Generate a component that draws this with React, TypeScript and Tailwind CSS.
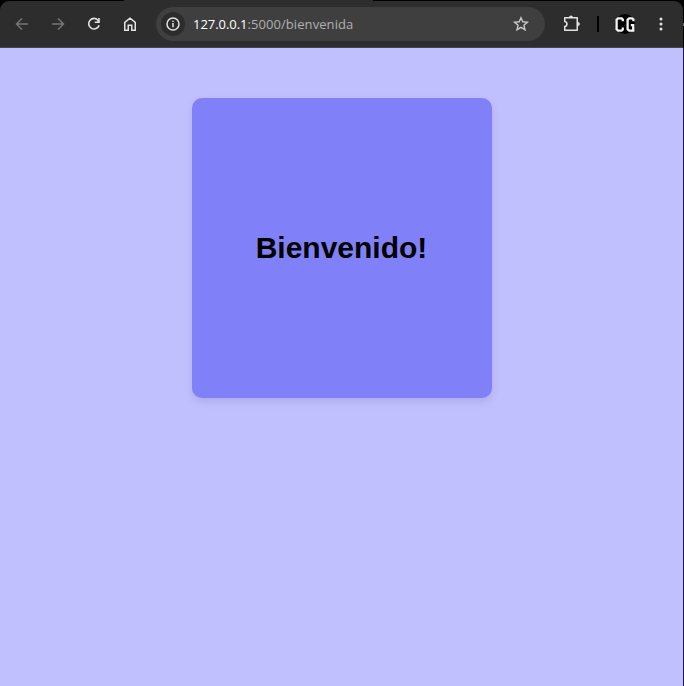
import type { ReactNode } from 'react';

function Icon({ children, className = '' }: { children: ReactNode; className?: string }) {
  return (
    <svg viewBox="0 0 20 20" fill="none" stroke="currentColor" strokeWidth="1.5" className={`size-5 shrink-0 ${className}`}>
      {children}
    </svg>
  );
}

function Toolbar() {
  return (
    <header className="relative h-12 shrink-0 bg-black">
      <div className="ml-[124px] h-px w-[249px] bg-[#2d2d2d]" />
      <div className="absolute top-[23px] right-0 h-[3px] w-px bg-[#6f6759]" />
      <div className="mr-px flex h-[47px] items-center rounded-t-[9px] border-b border-[#48464c] bg-[#2d2d2d] pl-3">
        <div className="flex gap-4 text-[#e3e3e3]">
          <Icon className="text-[#757575]">
            <path d="M16 10H5M10 4.5L4.5 10L10 15.5" />
          </Icon>
          <Icon className="text-[#757575]">
            <path d="M4 10H15M10 4.5L15.5 10L10 15.5" />
          </Icon>
          <Icon>
            <path d="M14.3 6.6A5.3 5.3 0 1 0 15.1 11.2" strokeWidth="1.6" />
            <path d="M15.8 4V9H10.8V7.5H13.2L14.2 6.2V4Z" fill="currentColor" stroke="none" />
          </Icon>
          <Icon>
            <path d="M4.75 16.25V8.3L10 4.1L15.25 8.3V16.25H11.75V11.2H8.25V16.25Z" />
          </Icon>
        </div>
        <div className="ml-4 flex h-[34px] w-[389px] items-center rounded-full bg-[#3f3f3f] pr-3.5 pl-[5px]">
          <div className="flex size-6 items-center justify-center rounded-full bg-[#2c2c2c] text-[#e3e3e3]">
            <Icon>
              <circle cx="10" cy="10" r="6" />
              <path d="M10 9V13.2M10 6.7V8.1" />
            </Icon>
          </div>
          <span className="ml-2 font-['Open_Sans','Noto_Sans',sans-serif] text-[13px] leading-5 tracking-[0.08px] whitespace-nowrap text-[#b0b0b0]">
            <span className="tracking-[-0.05px] text-white">127.0.0.1</span>:5000/bienvenida
          </span>
          <Icon className="ml-auto text-[#c7c7c7]">
            <path d="M10 3.7L11.8 7.8L16.4 8.2L12.9 11.2L14 15.7L10 13.3L6 15.7L7.1 11.2L3.6 8.2L8.2 7.8Z" strokeWidth="1.4" />
          </Icon>
        </div>
        <Icon className="ml-[17px] text-[#e3e3e3]">
          <path d="M2.75 3.75H15.25V16.25H2.75V12.6C5.7 12.1 5.7 7.9 2.75 7.4Z" strokeLinejoin="round" />
          <path d="M7.1 3.3A1.9 1.9 0 0 1 10.9 3.3ZM15.8 8A2 2 0 0 1 15.8 12Z" fill="currentColor" stroke="none" />
        </Icon>
        <div className="ml-[15px] h-4 w-0.5 bg-black" />
        <svg viewBox="0 0 20 20" className="ml-4 size-5 shrink-0 overflow-visible" fill="none">
          <circle cx="10" cy="10" r="10" fill="#000" />
          <path d="M7.8 7.2V5.5L6.6 4.3H3.1L1.6 5.7V15.3L3.1 16.7H6.6L7.8 15.5V13.4" stroke="#f4f4f4" strokeWidth="2.3" />
          <path d="M18.4 7.2V5.5L17 4.3H14.1L12.6 5.7V15.3L14.1 16.7H18.2V11.2H15.8" stroke="#f4f4f4" strokeWidth="2.3" />
        </svg>
        <svg viewBox="0 0 20 20" className="ml-4 size-5 shrink-0" fill="#e3e3e3">
          <circle cx="10" cy="5" r="1.5" />
          <circle cx="10" cy="10" r="1.5" />
          <circle cx="10" cy="15" r="1.5" />
        </svg>
      </div>
    </header>
  );
}

export default function App() {
  return (
    <div className="flex h-screen w-full flex-col overflow-hidden bg-[#211540]">
      <Toolbar />
      <main className="mr-px flex flex-1 items-start justify-center bg-[#c0c0ff] pt-[50px] pl-px">
        <section className="flex size-[300px] items-center justify-center rounded-[10px] bg-[#8080f8] shadow-[0_4px_8px_rgba(0,0,0,0.1)]">
          <h1 className="pr-px font-['Liberation_Sans',Arial,sans-serif] text-[30px] leading-9 font-bold text-black">Bienvenido!</h1>
        </section>
      </main>
    </div>
  );
}
